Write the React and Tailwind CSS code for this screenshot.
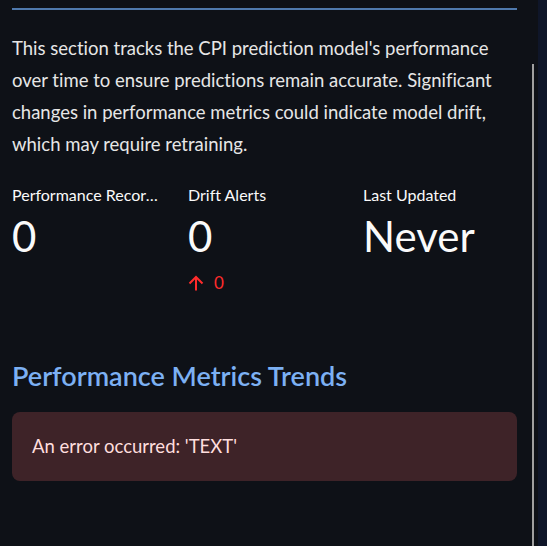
import React from 'react';

function Metric({ label, value, delta }) {
  return (
    <div className="min-w-0">
      <div className="h-[18px] text-[16px] leading-[18px] text-[#fafafa] truncate">{label}</div>
      <div className="mt-[11px] h-[42px] text-[42px] leading-[42px] text-[#fafafa]">{value}</div>
      {delta !== undefined && (
        <div className="mt-[16px] flex items-center gap-[10px] text-[17px] leading-[20px] text-[#ff2b2b]">
          <svg width="16" height="16" viewBox="0 0 16 16" fill="none" stroke="#ff2b2b" strokeWidth="2">
            <path d="M8 15.5V2M1.5 8.5L8 2l6.5 6.5" />
          </svg>
          <span>{delta}</span>
        </div>
      )}
    </div>
  );
}

export default function App() {
  return (
    <div className="flex h-[546px] w-[547px] bg-[#0e1117] font-['Lato',sans-serif] [font-variant-ligatures:none] overflow-hidden">
      <div className="w-[532px] pl-[12px] pr-[15px] pt-[8px]">
        <div className="h-[2px] bg-[#4f79ad]" />
        <p className="mt-[22px] text-[18.5px] leading-[32px] text-[#e6e6e6]">
          This section tracks the CPI prediction model's performance over time to ensure predictions remain accurate. Significant changes in performance metrics could indicate model drift, which may require retraining.
        </p>
        <div className="mt-[26px] grid grid-cols-[146px_145px_1fr] gap-x-[30px]">
          <Metric label="Performance Records" value="0" />
          <Metric label="Drift Alerts" value="0" delta="0" />
          <Metric label="Last Updated" value="Never" />
        </div>
        <h3 className="mt-[68px] text-[27px] leading-[30px] font-semibold text-[#7cb0f3]">
          Performance Metrics Trends
        </h3>
        <div className="mt-[21px] h-[69px] rounded-[8px] bg-[#3e2328] px-[20px] flex items-center text-[18.5px] text-[#ffdede]">
          An error occurred: 'TEXT'
        </div>
      </div>
      <div className="w-[2px] pt-[64px]">
        <div className="h-full bg-[#a0a0a0]" />
      </div>
      <div className="w-[4px]" />
      <div className="flex-1 bg-[#0f1629]" />
    </div>
  );
}
